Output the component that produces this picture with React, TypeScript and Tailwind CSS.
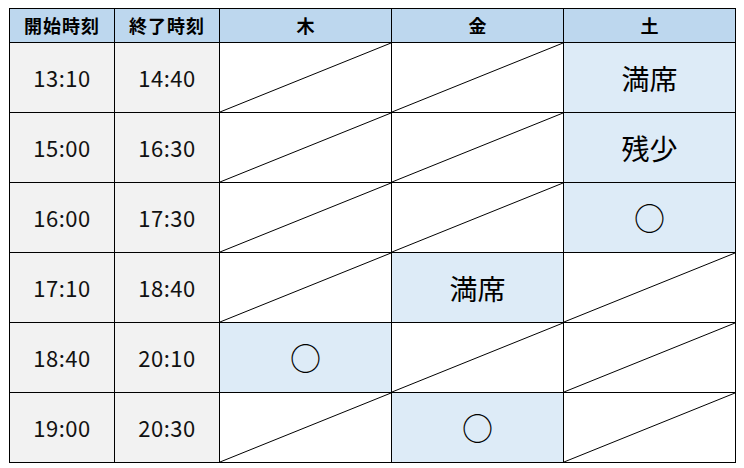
const days = ["木", "金", "土"]

type Slot = "" | "満席" | "残少" | "○"

const rows: { start: string; end: string; slots: Slot[] }[] = [
  { start: "13:10", end: "14:40", slots: ["", "", "満席"] },
  { start: "15:00", end: "16:30", slots: ["", "", "残少"] },
  { start: "16:00", end: "17:30", slots: ["", "", "○"] },
  { start: "17:10", end: "18:40", slots: ["", "満席", ""] },
  { start: "18:40", end: "20:10", slots: ["○", "", ""] },
  { start: "19:00", end: "20:30", slots: ["", "○", ""] },
]

function SlotCell({ value }: { value: Slot }) {
  if (!value) {
    return (
      <div className="relative h-[70px] border-r border-b border-black bg-white">
        {/* diagonal strike = not offered */}
        <svg className="absolute inset-0 h-full w-full overflow-visible">
          <line x1="0" y1="100%" x2="100%" y2="0" stroke="#000" strokeWidth="1" />
        </svg>
      </div>
    )
  }
  return (
    <div
      className={
        value === "○"
          ? "flex h-[70px] items-center justify-center border-r border-b border-black bg-[#ddebf7] text-[31px] text-black"
          : "flex h-[70px] items-center justify-center border-r border-b border-black bg-[#ddebf7] text-[28px] text-black"
      }
    >
      {value}
    </div>
  )
}

export default function App() {
  return (
    <div className="h-[468px] w-[744px] bg-white pt-[8px] pl-[9px] font-['Noto_Sans_CJK_JP',sans-serif]">
      <div className="grid w-[727px] grid-cols-[105px_105px_172px_172px_172px] border-t border-l border-black">
        {/* header */}
        <div className="flex h-[34px] items-center justify-center border-r border-b border-black bg-[#bdd7ee] text-[18px] font-bold tracking-[1px] text-black">
          開始時刻
        </div>
        <div className="flex h-[34px] items-center justify-center border-r border-b border-black bg-[#bdd7ee] text-[18px] font-bold tracking-[1px] text-black">
          終了時刻
        </div>
        {days.map((d) => (
          <div
            key={d}
            className="flex h-[34px] items-center justify-center border-r border-b border-black bg-[#bdd7ee] text-[18px] font-bold text-black"
          >
            {d}
          </div>
        ))}

        {rows.map((r) => (
          <div key={r.start} className="contents">
            <div className="flex h-[70px] items-center justify-center border-r border-b border-black bg-[#f2f2f2] text-[22px] tracking-[0.5px] text-[#111]">
              {r.start}
            </div>
            <div className="flex h-[70px] items-center justify-center border-r border-b border-black bg-[#f2f2f2] text-[22px] tracking-[0.5px] text-[#111]">
              {r.end}
            </div>
            {r.slots.map((s, i) => (
              <SlotCell key={i} value={s} />
            ))}
          </div>
        ))}
      </div>
    </div>
  )
}
